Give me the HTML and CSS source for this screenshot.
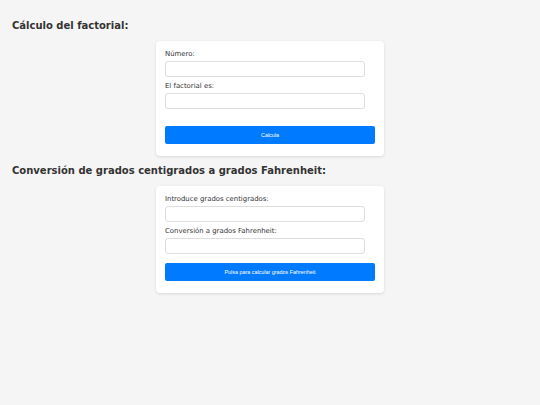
FILE: index.html
```html
<!DOCTYPE html>
<html lang="es">
<head>
<meta charset="utf-8">
<title>Cálculos</title>
<link rel="stylesheet" href="styles.css">
</head>
<body>
<main class="page">
  <h2 class="title">Cálculo del factorial:</h2>
  <form class="card">
    <label class="label" for="num">Número:</label>
    <input class="field" id="num" type="text">
    <label class="label" for="fact">El factorial es:</label>
    <input class="field" id="fact" type="text">
    <button class="btn btn-spaced" type="button">Calcula</button>
  </form>
  <h2 class="title">Conversión de grados centigrados a grados Fahrenheit:</h2>
  <form class="card">
    <label class="label" for="cel">Introduce grados centigrados:</label>
    <input class="field" id="cel" type="text">
    <label class="label" for="fah">Conversión a grados Fahrenheit:</label>
    <input class="field" id="fah" type="text">
    <button class="btn" type="button">Pulsa para calcular grados Fahrenheit</button>
  </form>
</main>
</body>
</html>
```

FILE: styles.css
```css
html, body {
  margin: 0;
  padding: 0;
  background: #f5f5f5;
}
body {
  font-family: "DejaVu Sans", Verdana, sans-serif;
  color: #333;
}
.page {
  padding: 11px 12px;
  display: flex;
  flex-direction: column;
}
.title {
  font-size: 10px;
  line-height: 16px;
  font-weight: bold;
  color: #333;
  margin: 7px 0;
}
.card {
  align-self: center;
  width: 210px;
  background: #fff;
  border-radius: 4px;
  box-shadow: 0 1px 3px rgba(0, 0, 0, 0.12);
  padding: 8px 9px 12px;
  display: flex;
  flex-direction: column;
}
.label {
  display: block;
  font-size: 6.9px;
  line-height: 10px;
  color: #333;
  margin-bottom: 2px;
}
.field {
  box-sizing: border-box;
  width: 200px;
  height: 16px;
  margin: 0 0 4px;
  padding: 0 4px;
  border: 1px solid #ddd;
  border-radius: 3px;
  background: #fff;
  font-size: 7px;
}
.btn {
  box-sizing: border-box;
  width: 210px;
  height: 18px;
  margin-top: 5px;
  border: none;
  border-radius: 2px;
  background: #007bff;
  color: #fff;
  font-family: "Liberation Sans", Arial, sans-serif;
  font-size: 5.4px;
  padding: 0;
}
.btn-spaced {
  margin-top: 13px;
}
```
